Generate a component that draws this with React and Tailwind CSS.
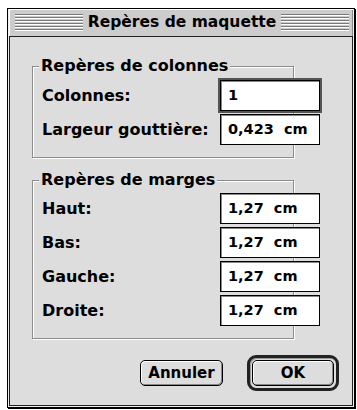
const stripes =
  "h-[18px] flex-1 bg-[image:repeating-linear-gradient(to_bottom,#7a7a7a_0px,#7a7a7a_1px,#ffffff_1px,#ffffff_2px,transparent_2px,transparent_3px)]";

function Field({ value, focused }) {
  return (
    <div
      className={
        "w-[100px] h-[31px] shrink-0 bg-white border border-black shadow-[inset_1px_1px_0_#888] flex items-center px-[7px] whitespace-pre text-[14.5px] " +
        (focused ? "outline-2 outline-[#555]" : "")
      }
    >
      {value}
    </div>
  );
}

function Row({ label, value, focused }) {
  return (
    <div className="flex items-center w-max">
      <span className="w-[178px] shrink-0">{label}</span>
      <Field value={value} focused={focused} />
    </div>
  );
}

function Group({ title, className, children }) {
  return (
    <div
      className={
        "relative ml-[22px] w-[262px] border border-[#8c8c8c] shadow-[inset_1px_1px_0_#fff,1px_1px_0_#fff] " +
        className
      }
    >
      <span className="absolute left-[6px] top-[-11px] px-[2px] leading-[20px] bg-[#dddddd]">
        {title}
      </span>
      <div className="pl-[9px] flex flex-col gap-[3px]">{children}</div>
    </div>
  );
}

export default function App() {
  return (
    <div className="w-[357px] h-[410px] bg-white overflow-hidden pt-[8px] pl-[7px] font-['DejaVu_Sans',sans-serif] font-bold text-[16px] text-black">
      <div className="w-[348px] h-[400px] border border-black shadow-[1px_1px_0_#000] bg-[#eeeeee] px-[1px] pb-[1px] flex flex-col">
        {/* title bar */}
        <div className="h-[27px] shrink-0 bg-[#cccccc] shadow-[inset_1px_1px_0_#fff,inset_-1px_0_0_#888] flex items-center pl-[6px] pr-[4px]">
          <div className={stripes} />
          <span className="px-[5px] leading-none text-[15.5px]">Repères de maquette</span>
          <div className={stripes} />
        </div>

        {/* content */}
        <div className="flex-1 border border-[#222] bg-[#dddddd] flex flex-col">
          <Group title="Repères de colonnes" className="mt-[29px] h-[92px] pt-[13px]">
            <Row label="Colonnes:" value="1" focused />
            <Row label="Largeur gouttière:" value="0,423  cm" />
          </Group>

          <Group title="Repères de marges" className="mt-[22px] h-[159px] pt-[12px]">
            <Row label="Haut:" value="1,27  cm" />
            <Row label="Bas:" value="1,27  cm" />
            <Row label="Gauche:" value="1,27  cm" />
            <Row label="Droite:" value="1,27  cm" />
          </Group>

          <div className="mt-[16px] h-[36px] flex justify-end items-center gap-[24px] pr-[13px] text-[15px]">
            <button className="w-[83px] h-[26px] rounded-[5px] border border-black bg-[#dddddd] shadow-[inset_1px_1px_0_#fff,inset_-1px_-1px_0_#888] flex items-center justify-center">
              Annuler
            </button>
            <div className="w-[92px] h-[36px] rounded-[9px] border-[3px] border-[#222] shadow-[inset_1px_1px_0_#999] p-[2px] bg-[#dddddd]">
              <button className="w-full h-full rounded-[5px] border border-black bg-[#dddddd] shadow-[inset_1px_1px_0_#fff,inset_-1px_-1px_0_#888] flex items-center justify-center">
                OK
              </button>
            </div>
          </div>
        </div>
      </div>
    </div>
  );
}
